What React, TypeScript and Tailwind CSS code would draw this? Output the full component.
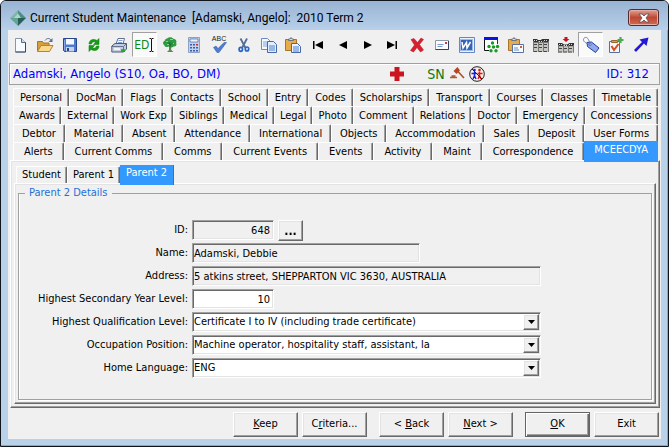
import type { ReactNode } from 'react';

const sunken =
  'border border-t-[#a0a0a0] border-l-[#a0a0a0] border-r-white border-b-white shadow-[inset_1px_1px_0_#696969,inset_-1px_-1px_0_#e3e3e3] outline-none';
const raised =
  'border border-t-white border-l-white border-r-[#696969] border-b-[#696969] shadow-[inset_-1px_-1px_0_#a0a0a0,inset_1px_1px_0_#e3e3e3]';

const tabRows: string[][] = [
  ['Personal', 'DocMan', 'Flags', 'Contacts', 'School', 'Entry', 'Codes', 'Scholarships', 'Transport', 'Courses', 'Classes', 'Timetable'],
  ['Awards', 'External', 'Work Exp', 'Siblings', 'Medical', 'Legal', 'Photo', 'Comment', 'Relations', 'Doctor', 'Emergency', 'Concessions'],
  ['Debtor', 'Material', 'Absent', 'Attendance', 'International', 'Objects', 'Accommodation', 'Sales', 'Deposit', 'User Forms'],
  ['Alerts', 'Current Comms', 'Comms', 'Current Events', 'Events', 'Activity', 'Maint', 'Correspondence', 'MCEECDYA'],
];

function Icon({ children }: { children: ReactNode }) {
  return (
    <svg viewBox="0 0 16 16" className="h-4 w-4 overflow-visible" aria-hidden="true">
      {children}
    </svg>
  );
}

const Clipboard = (
  <>
    <path d="M.5 2.500h11v11H.5z" fill="#e5ac48" stroke="#a6752b" />
    <path d="M3.500 3.500V2h1.500L6 .5 7 2h1.500v1.500z" fill="#d8dce2" stroke="#6d7480" />
  </>
);

const toolbar: { name: string; pressed?: boolean; icon: ReactNode }[] = [
  {
    name: 'New',
    icon: (
      <Icon>
        <path d="M3.500 1.500h6l4 4v9.500h-10z" fill="#f8fbff" stroke="#8795ad" />
        <path d="M9.500 1.500v4h4" fill="#cfdcef" stroke="#5d6c86" />
        <path d="M13.500 5.500v9.500h-10" fill="none" stroke="#2f4769" />
      </Icon>
    ),
  },
  {
    name: 'Open',
    icon: (
      <Icon>
        <path d="M.5 14V4.500h5l1 1.500h5.500v3" fill="#d99d3e" stroke="#a8742a" />
        <path d="M.5 14.500 4 8.500h12l-3.500 6z" fill="#f9d98a" stroke="#b78331" />
        <path d="M8 3.500C10 .8 12.500 1 14 3" fill="none" stroke="#5a6f8f" />
        <path d="M15.500 1v4h-4z" fill="#5a6f8f" />
      </Icon>
    ),
  },
  {
    name: 'Save',
    icon: (
      <Icon>
        <path d="M1.500 1.500h13v13h-12l-1-1z" fill="#4e7bd0" stroke="#28458c" />
        <path d="M4 2h8v5.500H4z" fill="#f4f8ff" />
        <path d="M4 10h8v4.500H4z" fill="#c6d3e8" />
        <path d="M5 11h2v3H5z" fill="#28458c" />
        <path d="M2.500 3v10" stroke="#86a8ea" />
      </Icon>
    ),
  },
  {
    name: 'Refresh',
    icon: (
      <Icon>
        <path d="M3 7C3 3 7 1 11 3.500L13 1.500V7.500H7.500L9.500 5.300C7.500 4.200 6 5 5.500 7z" fill="#12a012" stroke="#087008" strokeWidth=".5" />
        <path d="M13 9C13 13 9 15 5 12.500L3 14.500V8.500H8.500L6.500 10.700C8.500 11.800 10 11 10.500 9z" fill="#12a012" stroke="#087008" strokeWidth=".5" />
      </Icon>
    ),
  },
  {
    name: 'Print',
    icon: (
      <Icon>
        <path d="M5 7 7 1.500h6.500L12 7z" fill="#f7faff" stroke="#62718b" />
        <path d="M7.500 3.500h4M7 5.500h4" stroke="#7fa2dc" />
        <path d="M.8 9 4 6.500h11.500V12l-3 3H.8z" fill="#c3cddd" stroke="#4c5b75" />
        <path d="M1 9.500h11.500l3-3M12.500 9.500V15" fill="none" stroke="#65758f" />
        <path d="M3 12h6" stroke="#fff" strokeWidth="1.500" />
        <path d="M10 12.200h4v2.800h-4z" fill="#27a52b" />
      </Icon>
    ),
  },
  {
    name: 'Edit',
    pressed: true,
    icon: (
      <span className="flex items-center text-[#0b8a13]">
        <span className="font-['DejaVu_Sans_Condensed',sans-serif] text-[12px] leading-4">ED</span>
        <svg viewBox="0 0 5 14" className="h-3.5 w-[5px]" aria-hidden="true">
          <path d="M.5.500H2l.5.500.5-.5h1.500M2.500 1v12M.5 13.500H2l.5-.5.5.5h1.500" fill="none" stroke="#111" />
        </svg>
      </span>
    ),
  },
  {
    name: 'Family tree',
    icon: (
      <Icon>
        <path d="M7 8h2.200v5l2.300 2H5l2-2z" fill="#5d8a4c" />
        <path d="M5 1.500C7-.3 10-.2 11.500 1.800c2.500.2 3.500 2.500 2.700 4.200 1 2-.7 3.800-2.700 3.500-1.500 1.500-3.500 1-4-.2C5 10.800 2.500 10 2.200 8 .3 6.800 1 4 2.800 3.700 3 2.400 3.800 1.600 5 1.500z" fill="#2f9a42" />
        <path d="M4 4h2v1H4zM8 2h3v1H8zM10 6h2v1h-2zM5 7h2v1H5z" fill="#8cd184" />
        <path d="M8 10V5M8 8l3-2M8 7 5.500 5.500" stroke="#17632a" strokeWidth=".8" />
      </Icon>
    ),
  },
  {
    name: 'Calculator',
    icon: (
      <Icon>
        <path d="M2.500.500h11v15h-11z" fill="#c6d2e8" stroke="#8fa0c2" />
        <path d="M4 2h8v3H4z" fill="#eef5ff" stroke="#4069aa" strokeWidth=".7" />
        <path d="M4 7h2v1.500H4zM7 7h2v1.500H7zM4 10h2v1.500H4zM7 10h2v1.500H7zM4 13h2v1.500H4zM7 13h2v1.500H7zM10 10h2v1.500h-2zM10 13h2v1.500h-2z" fill="#3161b5" />
        <path d="M10 7h2v1.500h-2z" fill="#c62b2b" />
      </Icon>
    ),
  },
  {
    name: 'Spelling',
    icon: (
      <span className="flex flex-col items-center">
        <span className="font-['Liberation_Sans',sans-serif] text-[7px] leading-[6px] text-[#222]">ABC</span>
        <svg viewBox="0 0 16 11" className="h-[11px] w-4" aria-hidden="true">
          <path d="M2.500 5.500 5 4l2 2.500L13 .5h2.500L8 10.500H6z" fill="#4d7cd2" stroke="#2e57a3" strokeWidth=".5" />
        </svg>
      </span>
    ),
  },
  {
    name: 'Cut',
    icon: (
      <Icon>
        <path d="m4.500 1.500 5 9.500M11 1.500 6 11" stroke="#536d94" strokeWidth="1.800" />
        <ellipse cx="4.800" cy="12.300" rx="1.700" ry="2" fill="none" stroke="#2c66c2" strokeWidth="1.700" />
        <ellipse cx="11" cy="12" rx="1.700" ry="2" fill="none" stroke="#2c66c2" strokeWidth="1.700" />
      </Icon>
    ),
  },
  {
    name: 'Copy',
    icon: (
      <Icon>
        <path d="M.5 1.500h6l3 3v8h-9z" fill="#f3f8ff" stroke="#6c8cc0" />
        <path d="M2 5h5M2 7h5M2 9h5" stroke="#7ea4de" />
        <path d="M6.500 4.500h6l3 3v8h-9z" fill="#e2edff" stroke="#4569a7" />
        <path d="M8 9h6M8 11h6M8 13h6" stroke="#4f7fce" />
      </Icon>
    ),
  },
  {
    name: 'Paste',
    icon: (
      <Icon>
        {Clipboard}
        <path d="M6.500 6.500h6l3 3v6h-9z" fill="#e9f2ff" stroke="#4569a7" />
        <path d="M8 10h6M8 12h6M8 14h6" stroke="#4f7fce" />
      </Icon>
    ),
  },
  { name: 'First', icon: <Icon><path d="M3 4h1.500v8H3zM13 4v8L5 8z" /></Icon> },
  { name: 'Previous', icon: <Icon><path d="M12 4v8L4 8z" /></Icon> },
  { name: 'Next record', icon: <Icon><path d="M4 4v8l8-4z" /></Icon> },
  { name: 'Last', icon: <Icon><path d="M11.500 4H13v8h-1.500zM3 4v8l8-4z" /></Icon> },
  {
    name: 'Delete',
    icon: (
      <Icon>
        <path d="M2 2.500 5 1.500l3.500 4 3.500-4.500 2.500 1.500-4 5 4 5.500-3 2-3.500-4.500L4.500 15 1.500 13.500 5.500 8z" fill="#d82130" stroke="#b3121f" strokeWidth=".5" />
      </Icon>
    ),
  },
  {
    name: 'Mail',
    icon: (
      <Icon>
        <path d="M1.500 3.500h13v9h-13z" fill="#fcfcff" stroke="#8e98aa" />
        <path d="M14.500 4v8.500h-13" stroke="#34415a" fill="none" />
        <path d="M3.500 7.500h6M3.500 9.500h5" stroke="#7b98ca" />
        <path d="M11 5h2v2h-2z" fill="#c53b3b" />
      </Icon>
    ),
  },
  {
    name: 'Word',
    icon: (
      <Icon>
        <path d="M.5.500h15v15H.5z" fill="#eaf2ff" stroke="#6688bf" />
        <path d="M1.500 2.500h12v11h-12z" fill="#3565b8" stroke="#9dbbe8" />
        <path d="m3 5 1 6 3.500-5.500.5 5.500 3.500-6" fill="none" stroke="#fff" strokeWidth="1.500" />
      </Icon>
    ),
  },
  {
    name: 'Chart',
    icon: (
      <Icon>
        <path d="M1.500 1.500h13v12h-13z" fill="#fff" />
        <path d="M14.500 2v5" stroke="#333" />
        <path d="M1.500 2v11.500H6" fill="none" stroke="#111" />
        <path d="M1 0h14v3H1z" fill="#0712e5" />
        <g fill="#169b22">
          <circle cx="9.500" cy="6" r="1.700" />
          <circle cx="6" cy="9.500" r="1.700" />
          <circle cx="10.500" cy="10" r="1.700" />
          <circle cx="14.500" cy="9.500" r="1.700" />
          <circle cx="8" cy="13.800" r="1.700" />
          <circle cx="13" cy="13.800" r="1.700" />
        </g>
      </Icon>
    ),
  },
  {
    name: 'Paste mail',
    icon: (
      <Icon>
        {Clipboard}
        <path d="M4.500 7.500h11v8h-11z" fill="#f7faff" stroke="#5973a0" />
        <path d="M6 11h4M6 13h5" stroke="#6c90ca" />
        <path d="M12 9h2v2h-2z" fill="#d35f37" />
      </Icon>
    ),
  },
  {
    name: 'Schedule',
    icon: (
      <Icon>
        <path d="M0 4h16v11H0z" fill="#c6c6c0" />
        <path d="M0 2h4l1 1h3l1-1h7v3.500H0z" fill="#333" />
        <path d="M0 7.500h16M0 10.500h16M0 14.500h16" stroke="#444" strokeDasharray="4 1" />
        <path d="M.5 4v11M5.500 4v11M10.500 4v11M15.500 4v11" stroke="#777" />
        <path d="M1 3.500h3M6 4.500h3M11 3.500h4" stroke="#ddd" strokeDasharray="1 1" />
      </Icon>
    ),
  },
  {
    name: 'Insert schedule',
    icon: (
      <Icon>
        <path d="M6.500 0h3v2h2L8 5 4.500 2h2z" fill="#cc1020" />
        <path d="M0 6h4l2 1.500h3L11.500 6H16v3.500H0z" fill="#333" />
        <path d="M0 9.500h16v6H0z" fill="#c6c6c0" />
        <path d="M0 11.500h16M0 15h16" stroke="#444" strokeDasharray="4 1" />
        <path d="M.5 8v7M5.500 8v7M10.500 8v7M15.500 8v7" stroke="#777" />
        <path d="M1 7.500h3M6 8.500h3M11 7.500h4" stroke="#ddd" strokeDasharray="1 1" />
      </Icon>
    ),
  },
  {
    name: 'Tag',
    pressed: true,
    icon: (
      <Icon>
        <path d="M4 5.500 8.500 5l7.500 6-3.500 4.500L4.500 9.500z" fill="#8fa9ec" stroke="#1d3fa6" />
        <circle cx="7" cy="7.500" r="1" fill="#fff" stroke="#1d3fa6" strokeWidth=".7" />
        <path d="M7 7C1 6.500-1 2.500 1.500.8S6 2.500 7 7" fill="none" stroke="#6f83ad" />
      </Icon>
    ),
  },
  {
    name: 'Add task',
    icon: (
      <Icon>
        <path d="M1.500 4.500h10v11h-10z" fill="#f3f6fc" stroke="#566f9d" />
        <path d="M3.500 5.500v-2h6v2z" fill="#d9a145" stroke="#946929" />
        <path d="m3.500 9 2.500 4 4.500-6" fill="none" stroke="#d94c20" strokeWidth="2" />
        <path d="M12.500 0v6M9.500 3h6" stroke="#4ca952" strokeWidth="2.200" />
      </Icon>
    ),
  },
  {
    name: 'Go',
    icon: <Icon><path d="M15.500.500 13.500 9l-2.500-2.500L3 15l-2-2 8-8L6.500 2.500z" fill="#2418d5" /></Icon>,
  },
];

function TitleBar() {
  return (
    <header className="flex h-[29px] items-center bg-linear-to-b from-[#98b3d3] to-[#b8d0e9] pt-1 pr-[9px] pl-[9px]">
      <svg viewBox="0 0 16 16" className="mr-1 h-4 w-4" aria-hidden="true">
        <path d="M8 0 0 8h8z" fill="#7fb5aa" />
        <path d="m8 0 8 8H8z" fill="#4c8f85" />
        <path d="m0 8 8 8V8z" fill="#64a497" />
        <path d="m16 8-8 8V8z" fill="#2a5f59" />
        <path d="m8 3.500 3 4.500H4z" fill="#a8d8cc" />
      </svg>
      <h1 className="flex-1 font-[Roboto,sans-serif] text-[12px] leading-4 whitespace-pre text-black">
        {'Current Student Maintenance  [Adamski, Angelo]:  2010 Term 2'}
      </h1>
      <button
        aria-label="Close"
        className="flex h-[17px] w-[31px] items-center justify-center rounded-[3px] border border-[#552b30] bg-linear-to-b from-[#dda194] from-0% via-[#bd4834] via-50% to-[#cf6b52] shadow-[inset_0_0_0_1px_#e4aea4]"
      >
        <svg viewBox="0 0 12 10" className="h-2.5 w-3" aria-hidden="true">
          <path d="M1 1h3l2 2 2-2h3L8 5l3 4H8L6 7 4 9H1l3-4z" fill="#fff" stroke="#5b4a52" strokeWidth=".8" />
        </svg>
      </button>
    </header>
  );
}

function StudentBar() {
  return (
    <div className="mx-px flex h-[22px] items-center border border-[#a0a0a0] pr-2.5 pl-[3px] font-['DejaVu_Sans_Condensed',sans-serif] text-[13px] leading-4 text-[#0000ff] shadow-[inset_1px_1px_0_#fff]">
      <span className="flex-1">Adamski, Angelo (S10, Oa, BO, DM)</span>
      <svg viewBox="0 0 16 16" className="mr-[22px] h-4 w-4" aria-hidden="true">
        <path d="M5.500 1h5v4.500H15v5h-4.500V15h-5v-4.500H1v-5h4.500z" fill="#cb1420" />
      </svg>
      <span className="mr-1 text-[14px] text-[#087a10]">SN</span>
      <svg viewBox="0 0 16 16" className="mr-1 h-4 w-4" aria-hidden="true">
        <path d="m4.500 5 4-4 2.500 3.500L7.500 8z" fill="#b84422" />
        <path d="m8.500 5 6.500 7" stroke="#a6502b" strokeWidth="1.600" />
        <path d="M1 11.500h7M2.500 10h4" stroke="#b05a38" strokeWidth="1.300" />
      </svg>
      <svg viewBox="0 0 16 16" className="mr-[122px] h-4 w-4" aria-hidden="true">
        <circle cx="8" cy="8" r="7.300" fill="#fbeee2" stroke="#222" />
        <circle cx="5.500" cy="4" r="1.300" fill="#1722dd" />
        <path d="M5.500 5.500v4L4 13M5.500 9.500 7 13M2.500 7.500h5" stroke="#1722dd" strokeWidth="1.400" fill="none" />
        <circle cx="10.500" cy="4" r="1.300" fill="#d91a20" />
        <path d="M10.500 5.500v4L9 13M10.500 9.500 12 13M8.500 7.500h5" stroke="#d91a20" strokeWidth="1.400" fill="none" />
        <path d="m3 3 10 10" stroke="#222" />
      </svg>
      <span>ID: 312</span>
    </div>
  );
}

const tabEdge =
  'rounded-t-[2px] border-t border-l border-r border-t-white border-l-white border-r-[#696969] shadow-[inset_-1px_0_0_#a0a0a0] whitespace-nowrap';

function MainTabs() {
  return (
    <div role="tablist" aria-label="Sections" className="pr-[3px] pl-[5px]">
      {tabRows.map((row) => (
        <div key={row[0]} className="flex h-[18px]">
          {row.map((name) =>
            name === 'MCEECDYA' ? (
              <button key={name} role="tab" aria-selected="true" className="relative z-10 -mt-px -mb-0.5 flex-auto bg-[#3399ff] px-px pb-1 leading-4 text-white">
                {name}
              </button>
            ) : (
              <button key={name} role="tab" aria-selected="false" className={`flex-auto px-px leading-4 ${tabEdge}`}>
                {name}
              </button>
            ),
          )}
        </div>
      ))}
    </div>
  );
}

function Row({ id, label, children }: { id: string; label: string; children: ReactNode }) {
  return (
    <div className="flex h-[23px] items-start">
      <label htmlFor={id} className="mr-1 w-[167px] text-right leading-5">
        {label}
      </label>
      {children}
    </div>
  );
}

function Combo({ id, value }: { id: string; value: string }) {
  return (
    <div className="relative w-[349px]">
      <select id={id} className={`block h-5 w-full appearance-none bg-white px-px leading-4 ${sunken}`}>
        <option>{value}</option>
      </select>
      <span className={`pointer-events-none absolute top-0.5 right-0.5 flex h-4 w-4 items-center justify-center bg-[#f0f0f0] ${raised}`}>
        <svg viewBox="0 0 7 4" className="h-1 w-[7px]" aria-hidden="true">
          <path d="M0 0h7L3.500 4z" />
        </svg>
      </span>
    </div>
  );
}

function Action({ children, primary }: { children: ReactNode; primary?: boolean }) {
  return (
    <button
      className={
        primary
          ? 'h-[25px] w-[65px] border border-[#646464] shadow-[inset_1px_1px_0_#fff,inset_-1px_-1px_0_#696969,inset_-2px_-2px_0_#a0a0a0]'
          : `h-[25px] w-[65px] ${raised}`
      }
    >
      {children}
    </button>
  );
}

export default function App() {
  return (
    <div className="flex min-h-screen flex-col overflow-hidden rounded-t-[6px] border border-[#10151c] bg-[#bad1ea] font-['DejaVu_Sans_Condensed',sans-serif] text-[11px] text-black">
      <TitleBar />
      <div className="flex flex-1 flex-col border-r border-b border-[#35cbe6] pr-1.5 pb-1.5 pl-[7px]">
        <main className="flex flex-1 flex-col bg-[#f0f0f0]">
          <div role="toolbar" aria-label="Main" className="flex h-[33px] items-start justify-between pt-0.5 pr-2">
            {toolbar.map((t) => (
              <button
                key={t.name}
                aria-label={t.name}
                title={t.name}
                className={
                  t.pressed
                    ? 'flex h-[25px] w-[25px] items-center justify-center border border-t-[#a0a0a0] border-l-[#a0a0a0] border-r-white border-b-white bg-[#fafafa]'
                    : 'flex h-[25px] w-6 items-center justify-center'
                }
              >
                {t.icon}
              </button>
            ))}
          </div>
          <StudentBar />
          <div className="flex flex-1 flex-col pt-[3px]">
            <MainTabs />
            <section className={`mr-px ml-0.5 flex flex-1 flex-col px-[3px] pt-1 pb-[3px] ${raised}`}>
              <div role="tablist" aria-label="Family" className="flex h-[18px] items-end pl-0.5">
                <button role="tab" aria-selected="false" className={`h-[17px] px-[5px] leading-4 ${tabEdge}`}>Student</button>
                <button role="tab" aria-selected="false" className={`h-[17px] px-[5px] leading-4 ${tabEdge}`}>Parent 1</button>
                <button role="tab" aria-selected="true" className="relative z-10 -mb-0.5 h-5 border-r border-[#696969] bg-[#3399ff] px-1.5 pb-1 leading-4 text-white">
                  Parent 2
                </button>
              </div>
              <div className={`flex flex-1 flex-col px-[3px] pt-px pb-[3px] ${raised}`}>
                <fieldset className="flex-1 border border-[#a0a0a0] px-0.5 pb-3 shadow-[inset_1px_0_0_#fff,1px_1px_0_#fff]">
                  <legend className="ml-1 px-1 leading-4 text-[#1e6fd9]">Parent 2 Details</legend>
                  <div className="pt-[19px]">
                    <Row id="id" label="ID:">
                      <input id="id" readOnly defaultValue="648" className={`h-5 w-[82px] px-[3px] text-right ${sunken}`} />
                      <button aria-label="Look up" className={`ml-1 h-[21px] w-[25px] text-[12px] leading-4 font-bold ${raised}`}>...</button>
                    </Row>
                    <Row id="name" label="Name:">
                      <input id="name" readOnly defaultValue="Adamski, Debbie" className={`h-5 w-[228px] px-px ${sunken}`} />
                    </Row>
                    <Row id="address" label="Address:">
                      <input id="address" readOnly defaultValue="5 atkins street, SHEPPARTON VIC 3630, AUSTRALIA" className={`h-5 w-[349px] px-px ${sunken}`} />
                    </Row>
                    <Row id="year" label="Highest Secondary Year Level:">
                      <input id="year" defaultValue="10" className={`h-5 w-[82px] bg-white px-[3px] text-right ${sunken}`} />
                    </Row>
                    <Row id="qualification" label="Highest Qualification Level:">
                      <Combo id="qualification" value="Certificate I to IV (including trade certificate)" />
                    </Row>
                    <Row id="occupation" label="Occupation Position:">
                      <Combo id="occupation" value="Machine operator, hospitality staff, assistant, la" />
                    </Row>
                    <Row id="language" label="Home Language:">
                      <Combo id="language" value="ENG" />
                    </Row>
                  </div>
                </fieldset>
              </div>
            </section>
          </div>
          <footer className="flex justify-end gap-3 pt-1 pr-0.5 pb-0.5">
            <div className="flex gap-1">
              <Action><u>K</u>eep</Action>
              <Action>C<u>r</u>iteria...</Action>
            </div>
            <div className="flex gap-1">
              <Action>&lt; <u>B</u>ack</Action>
              <Action><u>N</u>ext &gt;</Action>
            </div>
            <div className="flex gap-1">
              <Action primary><u>O</u>K</Action>
              <Action>Exit</Action>
            </div>
          </footer>
        </main>
      </div>
    </div>
  );
}
